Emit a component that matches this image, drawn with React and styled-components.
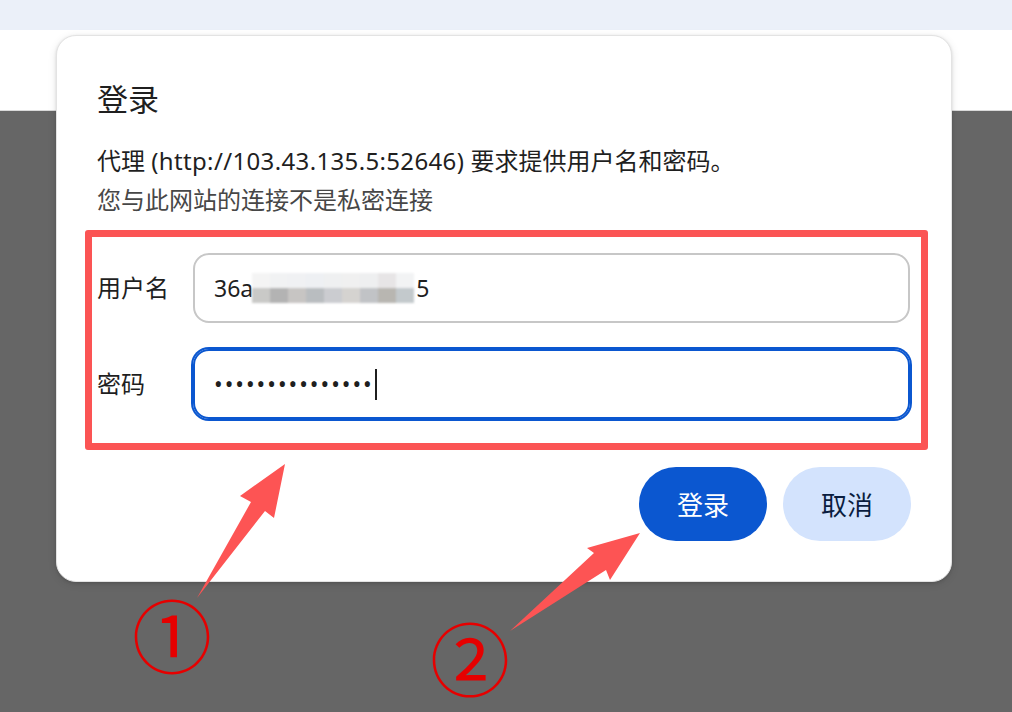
import React from 'react';
import styled, { createGlobalStyle } from 'styled-components';

const GlobalStyle = createGlobalStyle`
  body {
    margin: 0;
    font-family: "Noto Sans", "Noto Sans CJK SC", sans-serif;
    color: #1f1f1f;
  }
`;

const Page = styled.div`
  position: relative;
  display: flex;
  flex-direction: column;
  width: 1012px;
  height: 712px;
  overflow: hidden;
`;

const TopBand = styled.div`
  height: 30px;
  background-color: #ebf0f9;
`;

const Toolbar = styled.div`
  height: 80px;
  background-color: #ffffff;
  border-bottom: 1px solid #d9d9d9;
`;

const Backdrop = styled.div`
  flex: 1;
  background-color: #666666;
`;

const Dialog = styled.div`
  position: absolute;
  left: 56px;
  top: 35px;
  width: 896px;
  box-sizing: border-box;
  padding: 45px 40px 40px 40px;
  background-color: #ffffff;
  border-radius: 20px;
  border: 1px solid #e3e3e3;
  box-shadow: 0 1px 3px rgba(0, 0, 0, 0.12), 0 2px 8px rgba(0, 0, 0, 0.1);
  display: flex;
  flex-direction: column;
`;

const Title = styled.h1`
  margin: 0 0 24px 0;
  font-size: 31px;
  line-height: 36px;
  font-weight: 400;
`;

const Message = styled.p`
  margin: 0;
  font-size: 24px;
  line-height: 39px;
  color: ${({ secondary }) => (secondary ? '#474747' : '#1f1f1f')};
`;

const Url = styled.span`
  letter-spacing: 0.35px;
`;

const Highlight = styled.div`
  margin: 11px -17px 0 -12px;
  border: 7px solid #fb5454;
  border-radius: 3px;
  padding: 16px 11px 24px 5px;
  display: flex;
  flex-direction: column;
  gap: 26px;
`;

const Row = styled.div`
  display: flex;
  align-items: center;
`;

const Label = styled.label`
  width: 96px;
  flex-shrink: 0;
  font-size: 24px;
  line-height: 32px;
`;

const Field = styled.div`
  flex: 1;
  height: 70px;
  box-sizing: border-box;
  display: flex;
  align-items: center;
  padding-left: 19px;
  border-radius: 16px;
  border: 2px solid ${({ focused }) => (focused ? '#0b57d0' : '#c7c7c7')};
  box-shadow: ${({ focused }) => (focused ? '0 0 0 2px #0b57d0' : 'none')};
  font-size: 23px;
  color: #1f1f1f;
  white-space: nowrap;
`;

const Masked = styled.span`
  letter-spacing: 2px;
  font-size: 23px;
`;

const Caret = styled.span`
  display: inline-block;
  width: 2px;
  height: 31px;
  margin-left: 1px;
  background-color: #1f1f1f;
`;

const Mosaic = styled.svg`
  display: block;
  margin-left: -3px;
  flex-shrink: 0;
`;

const Actions = styled.div`
  display: flex;
  justify-content: flex-end;
  gap: 16px;
  margin-top: 17px;
`;

const Button = styled.button`
  width: 128px;
  height: 74px;
  border: none;
  border-radius: 37px;
  font-family: "Noto Sans", "Noto Sans CJK SC", sans-serif;
  font-size: 26px;
  cursor: pointer;
  background-color: ${({ primary }) => (primary ? '#0b57d0' : '#d3e3fd')};
  color: ${({ primary }) => (primary ? '#ffffff' : '#0a1d3f')};
`;

const Overlay = styled.svg`
  position: absolute;
  left: 0;
  top: 0;
  pointer-events: none;
`;

const Marker = styled.span`
  position: absolute;
  left: ${({ x }) => x}px;
  top: ${({ y }) => y}px;
  font-family: "Noto Sans CJK SC", sans-serif;
  font-size: 80px;
  line-height: 1.2;
  color: #e60000;
`;

const topCells = ['#f4f4f4', '#f1f2f3', '#f0f1f3', '#eef0f3', '#eff0f1', '#f0f0f0', '#eeeff0', '#e7e5e6', '#f2f3f4'];
const bottomCells = ['#c9c9c7', '#b3b3b3', '#c7c5c3', '#b9bdc0', '#cbccd0', '#d5d3d0', '#c1c3c6', '#b8b6b1', '#c3c9cc'];

const Pixelated = () => (
  <Mosaic width="166" height="34" viewBox="0 0 166 34">
    <defs>
      <filter id="soft" x="-5%" y="-10%" width="110%" height="120%">
        <feGaussianBlur stdDeviation="1" />
      </filter>
    </defs>
    <g filter="url(#soft)">
      {topCells.map((c, i) => (
        <rect key={`t${i}`} x={2 + i * 18} y={2} width={18} height={15} fill={c} />
      ))}
      {bottomCells.map((c, i) => (
        <rect key={`b${i}`} x={2 + i * 18} y={17} width={18} height={15} fill={c} />
      ))}
    </g>
  </Mosaic>
);

const App = () => (
  <>
    <GlobalStyle />
    <Page>
      <TopBand />
      <Toolbar />
      <Backdrop />

      <Dialog>
        <Title>登录</Title>
        <Message>
          代理 <Url>(http://103.43.135.5:52646)</Url> 要求提供用户名和密码。
        </Message>
        <Message secondary>您与此网站的连接不是私密连接</Message>

        <Highlight>
          <Row>
            <Label>用户名</Label>
            <Field>
              36a
              <Pixelated />
              5
            </Field>
          </Row>
          <Row>
            <Label>密码</Label>
            <Field focused>
              <Masked>•••••••••••••••</Masked>
              <Caret />
            </Field>
          </Row>
        </Highlight>

        <Actions>
          <Button primary>登录</Button>
          <Button>取消</Button>
        </Actions>
      </Dialog>

      <Overlay width="1012" height="712" viewBox="0 0 1012 712">
        <polygon points="285,464 240,496 251,502 197,598 265,511 274,518" fill="#fd5454" />
        <polygon points="640,533 587,548 594,553 510,631 606,570 610,580" fill="#fd5454" />
      </Overlay>
      <Marker x={132} y={584}>①</Marker>
      <Marker x={430} y={607}>②</Marker>
    </Page>
  </>
);

export default App;
